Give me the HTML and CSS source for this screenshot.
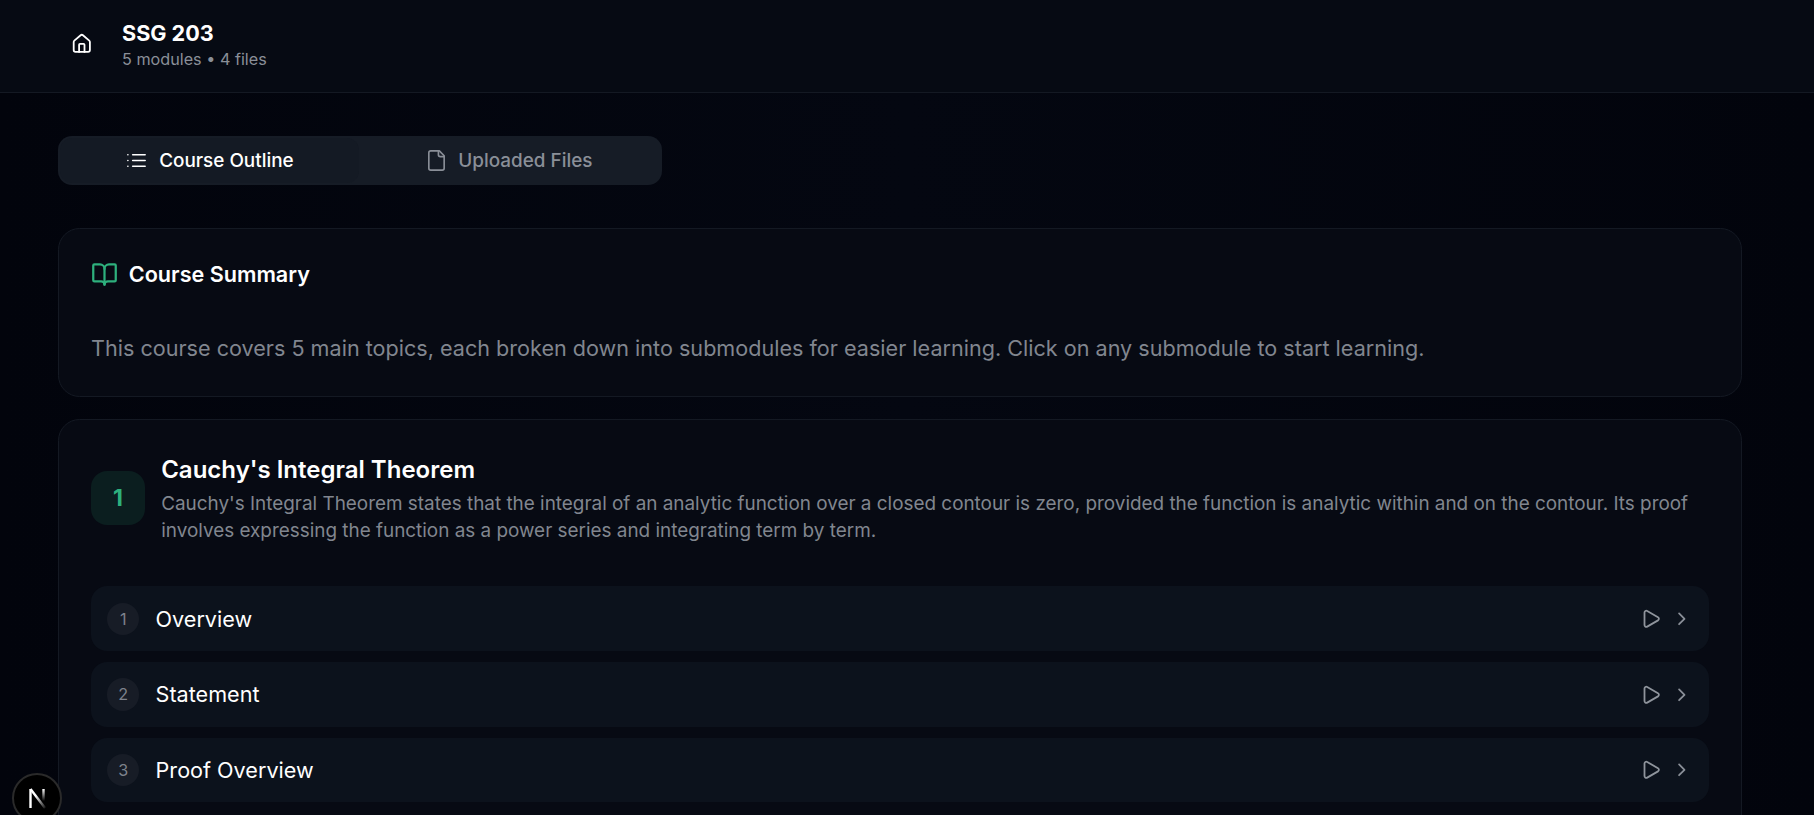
FILE: index.html
```html
<!DOCTYPE html>
<html lang="en">
<head>
<meta charset="utf-8">
<title>SSG 203</title>
<link rel="stylesheet" href="styles.css">
</head>
<body>
<div class="page">
  <header class="topbar">
    <a class="home" aria-label="Home">
      <svg class="ico ico-home" viewBox="0 0 24 24"><path d="M15 21v-8a1 1 0 0 0-1-1h-4a1 1 0 0 0-1 1v8"/><path d="M3 10a2 2 0 0 1 .709-1.528l7-5.999a2 2 0 0 1 2.582 0l7 5.999A2 2 0 0 1 21 10v9a2 2 0 0 1-2 2H5a2 2 0 0 1-2-2z"/></svg>
    </a>
    <div class="course">
      <h1 class="course-title">SSG 203</h1>
      <p class="course-meta">5 modules • 4 files</p>
    </div>
  </header>
  <main class="content">
    <div class="tabs">
      <button class="tab tab-active">
        <svg class="ico ico-tab" viewBox="0 0 24 24"><path d="M3 12h.01"/><path d="M3 18h.01"/><path d="M3 6h.01"/><path d="M8 12h13"/><path d="M8 18h13"/><path d="M8 6h13"/></svg>
        Course Outline
      </button>
      <button class="tab">
        <svg class="ico ico-tab" viewBox="0 0 24 24"><path d="M15 2H6a2 2 0 0 0-2 2v16a2 2 0 0 0 2 2h12a2 2 0 0 0 2-2V7Z"/><path d="M14 2v4a2 2 0 0 0 2 2h4"/></svg>
        Uploaded Files
      </button>
    </div>
    <section class="card summary">
      <h2 class="summary-title">
        <svg class="ico ico-book" viewBox="0 0 24 24"><path d="M12 7v14"/><path d="M3 18a1 1 0 0 1-1-1V4a1 1 0 0 1 1-1h5a4 4 0 0 1 4 4 4 4 0 0 1 4-4h5a1 1 0 0 1 1 1v13a1 1 0 0 1-1 1h-6a3 3 0 0 0-3 3 3 3 0 0 0-3-3z"/></svg>
        Course Summary
      </h2>
      <p class="summary-text">This course covers 5 main topics, each broken down into submodules for easier learning. Click on any submodule to start learning.</p>
    </section>
    <section class="card module">
      <div class="module-head">
        <div class="module-num">1</div>
        <div class="module-info">
          <h3 class="module-title">Cauchy's Integral Theorem</h3>
          <p class="module-desc">Cauchy's Integral Theorem states that the integral of an analytic function over a closed contour is zero, provided the function is analytic within and on the contour. Its proof involves expressing the function as a power series and integrating term by term.</p>
        </div>
      </div>
      <ul class="rows">
        <li class="row">
          <span class="row-num">1</span><span class="row-name">Overview</span>
          <svg class="ico ico-play" viewBox="0 0 24 24"><path d="M5 5a2 2 0 0 1 3.008-1.728l11.997 6.998a2 2 0 0 1 .003 3.458l-12 7A2 2 0 0 1 5 19z"/></svg>
          <svg class="ico ico-chev" viewBox="0 0 24 24"><path d="m9 18 6-6-6-6"/></svg>
        </li>
        <li class="row">
          <span class="row-num">2</span><span class="row-name">Statement</span>
          <svg class="ico ico-play" viewBox="0 0 24 24"><path d="M5 5a2 2 0 0 1 3.008-1.728l11.997 6.998a2 2 0 0 1 .003 3.458l-12 7A2 2 0 0 1 5 19z"/></svg>
          <svg class="ico ico-chev" viewBox="0 0 24 24"><path d="m9 18 6-6-6-6"/></svg>
        </li>
        <li class="row">
          <span class="row-num">3</span><span class="row-name">Proof Overview</span>
          <svg class="ico ico-play" viewBox="0 0 24 24"><path d="M5 5a2 2 0 0 1 3.008-1.728l11.997 6.998a2 2 0 0 1 .003 3.458l-12 7A2 2 0 0 1 5 19z"/></svg>
          <svg class="ico ico-chev" viewBox="0 0 24 24"><path d="m9 18 6-6-6-6"/></svg>
        </li>
      </ul>
    </section>
  </main>
  <div class="next-badge">
    <svg viewBox="0 0 24 24" class="next-logo">
      <defs>
        <linearGradient id="next-diag" x1="0" y1="0" x2="1" y2="1">
          <stop offset="0.35" stop-color="#fff"/>
          <stop offset="1" stop-color="#fff" stop-opacity="0.1"/>
        </linearGradient>
        <linearGradient id="next-right" gradientUnits="userSpaceOnUse" x1="18" y1="3" x2="18" y2="15">
          <stop offset="0" stop-color="#fff"/>
          <stop offset="1" stop-color="#fff" stop-opacity="0"/>
        </linearGradient>
      </defs>
      <path class="next-stem" d="M5.5 3v19"/>
      <path class="next-slash" d="M5.5 3 20 22"/>
      <path class="next-tail" d="M18.5 3v12"/>
    </svg>
  </div>
</div>
</body>
</html>
```

FILE: styles.css
```css
* { box-sizing: border-box; margin: 0; padding: 0; }
html, body { height: 100%; overflow: hidden; }
body {
  background: #03060f;
  color: #fff;
  font-family: Inter, "Liberation Sans", sans-serif;
}
.page {
  height: 815px;
  overflow: hidden;
  background: linear-gradient(90deg, #02040c 0, #040711 50%, #02040c 100%);
}
.ico {
  fill: none;
  stroke: currentColor;
  stroke-width: 2;
  stroke-linecap: round;
  stroke-linejoin: round;
  flex: none;
}
.topbar {
  height: 93px;
  display: flex;
  align-items: center;
  gap: 18px;
  padding-left: 59px;
  padding-bottom: 2px;
  background: #060a13;
  border-bottom: 1px solid #141923;
}
.home { width: 45px; height: 45px; margin-bottom: 3px; display: flex; align-items: center; justify-content: center; color: #fff; }
.ico-home { width: 21.6px; height: 21.6px; }
.course-title { font-size: 21.6px; font-weight: 700; line-height: 27px; }
.course-meta { font-size: 16.2px; line-height: 24px; color: #8a8f98; }
.content { padding: 43px 72px 0 58px; }
.tabs {
  width: 604px;
  height: 49px;
  display: flex;
  padding: 2px;
  background: #161c26;
  border-radius: 14px;
}
.tab {
  flex: 1;
  display: flex;
  align-items: center;
  justify-content: center;
  gap: 10.8px;
  padding-bottom: 1px;
  border: 0;
  border-radius: 12px;
  background: transparent;
  color: #8a8f98;
  font: 500 18.9px Inter, sans-serif;
}
.tab + .tab { padding-right: 2px; }
.tab-active { background: #141a24; color: #fff; }
.ico-tab { width: 23px; height: 23px; stroke-width: 1.7; }
.card {
  background: #070a13;
  border: 1px solid #141923;
  border-radius: 21.6px;
}
.summary { margin-top: 43px; height: 169px; padding: 32.4px 32.4px 32.4px 32px; }
.summary-title { display: flex; align-items: center; gap: 10.8px; font-size: 21.6px; font-weight: 600; line-height: 27px; }
.ico-book { width: 27px; height: 27px; color: #2eb07d; }
.summary-text { margin-top: 44px; font-size: 21.6px; line-height: 32.4px; color: #81868f; }
.module { margin-top: 22px; padding: 32.4px 32.4px 32.4px 32px; height: 600px; }
.module-head { display: flex; align-items: center; gap: 16.2px; }
.module-num {
  width: 54px;
  height: 54px;
  flex: none;
  display: flex;
  align-items: center;
  justify-content: center;
  border-radius: 16.2px;
  background: #0b1e1f;
  color: #2eb07d;
  font-size: 23px;
  font-weight: 700;
}
.module-title { font-size: 24px; font-weight: 600; line-height: 32.4px; margin-top: 2px; margin-bottom: 3.4px; }
.module-desc { font-size: 18.9px; line-height: 27px; color: #81868f; }
.rows { list-style: none; margin-top: 42.3px; display: flex; flex-direction: column; gap: 10.8px; }
.row {
  height: 64.8px;
  display: flex;
  align-items: center;
  padding: 0 16.2px 0 16px;
  background: #0c121c;
  border-radius: 16.2px;
}
.row-num {
  width: 32.4px;
  height: 32.4px;
  flex: none;
  display: flex;
  align-items: center;
  justify-content: center;
  border-radius: 50%;
  background: #171c26;
  color: #7d828c;
  font-size: 16.2px;
}
.row-name { flex: 1; margin-left: 16.2px; font-size: 21.6px; font-weight: 400; }
.ico-play { width: 21.6px; height: 21.6px; color: #8f949c; }
.ico-chev { width: 21.6px; height: 21.6px; margin-left: 9px; color: #8a8f98; }
.next-badge {
  position: absolute;
  left: 12px;
  top: 773px;
  width: 50px;
  height: 50px;
  display: flex;
  align-items: center;
  justify-content: center;
  background: #000;
  border: 2px solid #2a2a2a;
  border-radius: 50%;
}
.next-logo { width: 24px; height: 24px; fill: none; stroke-width: 2.4; }
.next-stem { stroke: #fff; }
.next-slash { stroke: url(#next-diag); }
.next-tail { stroke: url(#next-right); }
```
